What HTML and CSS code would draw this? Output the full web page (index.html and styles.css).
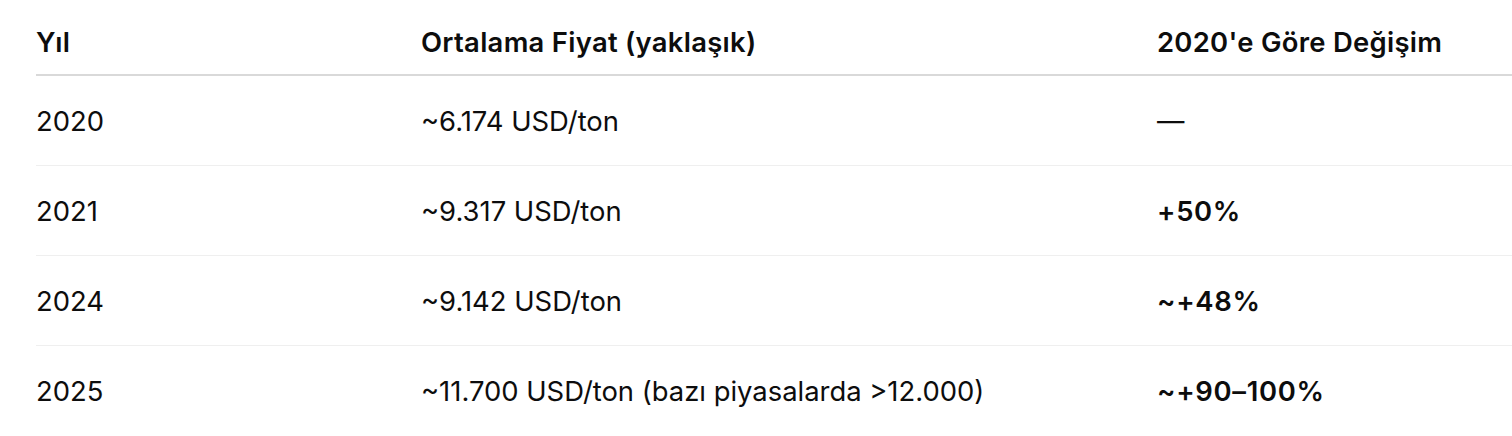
FILE: index.html
```html
<!DOCTYPE html>
<html lang="tr">
<head>
<meta charset="utf-8">
<title>Fiyat Tablosu</title>
<link rel="stylesheet" href="styles.css">
</head>
<body>
<div class="wrap">
  <table class="prices">
    <colgroup>
      <col class="c-year">
      <col class="c-price">
      <col class="c-change">
    </colgroup>
    <thead>
      <tr>
        <th>Yıl</th>
        <th>Ortalama Fiyat (yaklaşık)</th>
        <th>2020'e Göre Değişim</th>
      </tr>
    </thead>
    <tbody>
      <tr>
        <td>2020</td>
        <td>~6.174 USD/ton</td>
        <td>—</td>
      </tr>
      <tr>
        <td>2021</td>
        <td>~9.317 USD/ton</td>
        <td><strong>+50%</strong></td>
      </tr>
      <tr>
        <td>2024</td>
        <td>~9.142 USD/ton</td>
        <td><strong>~+48%</strong></td>
      </tr>
      <tr>
        <td>2025</td>
        <td>~11.700 USD/ton (bazı piyasalarda &gt;12.000)</td>
        <td><strong>~+90–100%</strong></td>
      </tr>
    </tbody>
  </table>
</div>
</body>
</html>
```

FILE: styles.css
```css
html, body {
  margin: 0;
  padding: 0;
  background: #ffffff;
}

body {
  font-family: Inter, "Liberation Sans", sans-serif;
  color: #0d0d0d;
  font-size: 27.4px;
  line-height: 36px;
}

.wrap {
  padding-left: 36px;
  overflow: hidden;
}

.prices {
  width: 1476px;
  border-collapse: collapse;
  table-layout: fixed;
}

.c-year { width: 385px; }
.c-price { width: 736px; }

.prices th {
  text-align: left;
  font-weight: 600;
  letter-spacing: 0.3px;
  padding: 24px 0 14px 0;
  border-bottom: 2px solid #d9d9d9;
  height: 36px;
}

.prices td {
  padding: 0;
  height: 89px;
  vertical-align: middle;
  border-bottom: 1px solid #efefef;
}

.prices tbody tr:last-child td {
  border-bottom: none;
}

.prices strong {
  font-weight: 600;
  letter-spacing: 0.7px;
}
```
